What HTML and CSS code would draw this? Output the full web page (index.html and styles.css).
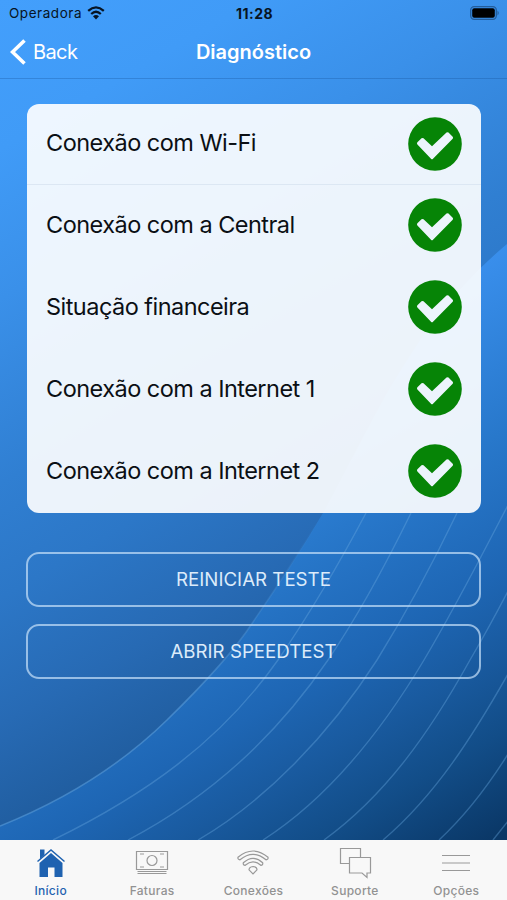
FILE: index.html
```html
<!DOCTYPE html>
<html lang="pt-BR">
<head>
    <meta charset="UTF-8">
    <meta name="viewport" content="width=device-width, initial-scale=1.0">
    <title>Diagnóstico</title>
    <link rel="stylesheet" href="styles.css">
</head>
<body>

<!-- Wallpaper -->
<svg class="wallpaper" viewBox="0 0 507 840" preserveAspectRatio="none">
    <defs>
        <linearGradient id="sky" gradientUnits="userSpaceOnUse" x1="0" y1="0" x2="500" y2="860">
            <stop offset="0" stop-color="#439ffc"/>
            <stop offset="0.13" stop-color="#409bf7"/>
            <stop offset="0.26" stop-color="#3a90e9"/>
            <stop offset="0.42" stop-color="#307fd2"/>
            <stop offset="0.52" stop-color="#2c77c7"/>
            <stop offset="0.63" stop-color="#276ab4"/>
            <stop offset="0.73" stop-color="#205d9f"/>
        </linearGradient>
        <linearGradient id="wave" gradientUnits="userSpaceOnUse" x1="0" y1="0" x2="500" y2="860">
            <stop offset="0.46" stop-color="#3a90ee"/>
            <stop offset="0.63" stop-color="#2878cb"/>
            <stop offset="0.75" stop-color="#1e66b4"/>
            <stop offset="0.82" stop-color="#195a9f"/>
            <stop offset="0.89" stop-color="#124d88"/>
            <stop offset="0.98" stop-color="#0a3766"/>
        </linearGradient>
        <linearGradient id="edge" gradientUnits="userSpaceOnUse" x1="0" y1="520" x2="0" y2="700">
            <stop offset="0" stop-color="#5da0dc" stop-opacity="0"/>
            <stop offset="1" stop-color="#5da0dc" stop-opacity="0.55"/>
        </linearGradient>
    </defs>
    <rect width="507" height="840" fill="url(#sky)"/>
    <path d="M0 826C70 798 123 763 167 720C208 680 235 650 253 622C288 571 302 548 323 513C370 430 410 325 507 244V840H0Z" fill="url(#wave)"/>
    <path d="M0 826C70 798 123 763 167 720C208 680 235 650 253 622C288 571 302 548 323 513" fill="none" stroke="url(#edge)" stroke-width="1.5"/>
    <g class="wave-lines">
        <path d="M53 840C145 795 220 742 278 660C311 612 340 562 366 513"/>
        <path d="M128 840C208 798 275 738 328 660C362 610 387 562 411 513"/>
        <path d="M198 840C265 801 329 735 377 660C408 610 433 563 457 513"/>
        <path d="M263 840C327 799 381 732 424 660C455 608 482 555 508 505"/>
        <path d="M324 840C386 795 430 732 470 660C484 636 496 614 508 591"/>
        <path d="M383 840C436 795 474 734 508 674"/>
        <path d="M439 840C467 814 488 786 508 754"/>
        <path d="M493 840L508 821"/>
    </g>
</svg>

<div class="screen">
    <div class="status-bar">
        <div class="carrier">
            <span>Operadora</span>
            <svg class="signal" viewBox="0 0 18 14">
                <path d="M1.2 4.800Q9-2 16.800 4.800M4.200 8Q9 3.600 13.800 8" fill="none" stroke="#071423" stroke-width="2.300"/>
                <path d="M6 10.300Q9 7.700 12 10.300L9 13.500Z" fill="#071423"/>
            </svg>
        </div>
        <div class="clock">11:28</div>
        <svg class="battery" viewBox="0 0 30 14">
            <rect x="0.700" y="0.700" width="25.600" height="12.600" rx="3.500" fill="none" stroke="#235d9b" stroke-width="1.300"/>
            <rect x="2.200" y="2.200" width="22.600" height="9.600" rx="2" fill="#000"/>
            <path d="M27.500 4.500Q30 7 27.500 9.500Z" fill="#235d9b"/>
        </svg>
    </div>

    <div class="nav-bar">
        <a class="back">
            <svg viewBox="0 0 16 26"><path d="M14.500 1.500L2.500 13L14.500 24.500" fill="none" stroke="#fff" stroke-width="3.600"/></svg>
            <span>Back</span>
        </a>
        <div class="title">Diagnóstico</div>
    </div>

    <div class="content">
        <div class="card">
            <div class="row first">
                <span>Conexão com Wi-Fi</span>
                <svg class="check" viewBox="0 0 54 54"><circle cx="27" cy="27" r="26.800"/><path d="M9.400 25.300L13.500 21.300Q14.500 20.500 15.500 21.300L24 29.300L38.500 15.600Q39.500 14.800 40.500 15.600L44.700 19.700Q45.500 20.700 44.700 21.700L25 41.700Q24 42.700 23 41.700L9.400 27.500Q8.400 26.400 9.400 25.300Z"/></svg>
            </div>
            <div class="row">
                <span>Conexão com a Central</span>
                <svg class="check" viewBox="0 0 54 54"><circle cx="27" cy="27" r="26.800"/><path d="M9.400 25.300L13.500 21.300Q14.500 20.500 15.500 21.300L24 29.300L38.500 15.600Q39.500 14.800 40.500 15.600L44.700 19.700Q45.500 20.700 44.700 21.700L25 41.700Q24 42.700 23 41.700L9.400 27.500Q8.400 26.400 9.400 25.300Z"/></svg>
            </div>
            <div class="row">
                <span>Situação financeira</span>
                <svg class="check" viewBox="0 0 54 54"><circle cx="27" cy="27" r="26.800"/><path d="M9.400 25.300L13.500 21.300Q14.500 20.500 15.500 21.300L24 29.300L38.500 15.600Q39.500 14.800 40.500 15.600L44.700 19.700Q45.500 20.700 44.700 21.700L25 41.700Q24 42.700 23 41.700L9.400 27.500Q8.400 26.400 9.400 25.300Z"/></svg>
            </div>
            <div class="row">
                <span>Conexão com a Internet 1</span>
                <svg class="check" viewBox="0 0 54 54"><circle cx="27" cy="27" r="26.800"/><path d="M9.400 25.300L13.500 21.300Q14.500 20.500 15.500 21.300L24 29.300L38.500 15.600Q39.500 14.800 40.500 15.600L44.700 19.700Q45.500 20.700 44.700 21.700L25 41.700Q24 42.700 23 41.700L9.400 27.500Q8.400 26.400 9.400 25.300Z"/></svg>
            </div>
            <div class="row">
                <span>Conexão com a Internet 2</span>
                <svg class="check" viewBox="0 0 54 54"><circle cx="27" cy="27" r="26.800"/><path d="M9.400 25.300L13.500 21.300Q14.500 20.500 15.500 21.300L24 29.300L38.500 15.600Q39.500 14.800 40.500 15.600L44.700 19.700Q45.500 20.700 44.700 21.700L25 41.700Q24 42.700 23 41.700L9.400 27.500Q8.400 26.400 9.400 25.300Z"/></svg>
            </div>
        </div>

        <button class="action">REINICIAR TESTE</button>
        <button class="action">ABRIR SPEEDTEST</button>
    </div>

    <div class="tab-bar">
        <div class="tab active">
            <svg viewBox="0 0 36 32">
                <path d="M6.500 16L18 6L29.500 16V30H21.500V20.500H15V30H6.500Z" fill="#1f62b0"/>
                <path d="M7 2.500H11.500V8L7 12Z" fill="#1f62b0"/>
                <path d="M4.500 14.500L18 3L31.500 14.500" fill="none" stroke="#1f62b0" stroke-width="1.500"/>
            </svg>
            <span>Início</span>
        </div>
        <div class="tab">
            <svg viewBox="0 0 36 32">
                <path d="M2.500 4.500H33.500V22.500H2.500ZM3.500 24.500H32.500M3.500 26.500H32.500M6 7H10M26 7H30M6 20H10M26 20H30"/>
                <circle cx="18" cy="13.500" r="5"/>
            </svg>
            <span>Faturas</span>
        </div>
        <div class="tab">
            <svg viewBox="0 0 36 32">
                <path d="M3 10.200Q18-2.200 33 10.200Q33.500 12.500 31 12.800Q18 1.800 5 12.800Q2.500 12.500 3 10.200ZM8.300 15.800Q18 6.800 27.700 15.800Q28.200 18 25.800 18.300Q18 11.500 10.200 18.300Q7.800 18 8.300 15.800ZM14 22.800Q14 20 18 19.500Q22 20 22 22.800L18 26.800Z"/>
            </svg>
            <span>Conexões</span>
        </div>
        <div class="tab">
            <svg viewBox="0 0 36 32">
                <path d="M12.500 16.500H3.500V1.500H23.500V10.500M12.500 10.500H33.500V26H30V30.500L25 26H12.500Z"/>
            </svg>
            <span>Suporte</span>
        </div>
        <div class="tab">
            <svg viewBox="0 0 36 32">
                <path d="M4 8.500H32M4 16H32M4 23.500H32"/>
            </svg>
            <span>Opções</span>
        </div>
    </div>
</div>

</body>
</html>
```
FILE: styles.css
```css
* {
    box-sizing: border-box;
}
body {
    margin: 0;
    font-family: Inter, Roboto, sans-serif;
    background-color: #2b76c6;
    overflow: hidden;
}
svg {
    display: block;
    flex-shrink: 0;
}
.wallpaper {
    position: absolute; /* Sits behind the whole screen */
    top: 0;
    left: 0;
    width: 507px;
    height: 840px;
}
.wave-lines path {
    fill: none;
    stroke: #6aa8e0;
    stroke-opacity: 0.38;
    stroke-width: 1.4;
}
.screen {
    position: relative;
    display: flex;
    flex-direction: column;
    width: 507px;
    height: 900px;
}
.status-bar {
    display: grid;
    grid-template-columns: 1fr auto 1fr;
    align-items: center;
    height: 26px;
    padding: 0 7px 0 9px;
    color: #071423;
    font-size: 13.5px;
}
.carrier {
    display: flex;
    align-items: center;
    gap: 5px;
    letter-spacing: 0.55px;
}
.signal {
    width: 18px;
    height: 14px;
}
.clock {
    font-weight: 700;
    font-size: 14px;
    letter-spacing: 0.5px;
}
.battery {
    width: 30px;
    height: 14px;
    justify-self: end;
}
.nav-bar {
    display: grid;
    grid-template-columns: 1fr auto 1fr;
    align-items: center;
    height: 53px;
    padding: 0 10px 1px;
    color: #fff;
    border-bottom: 1px solid rgba(20, 80, 150, 0.3);
}
.back {
    display: flex;
    align-items: center;
    gap: 7px;
    font-size: 20px;
    letter-spacing: -0.6px;
}
.back svg {
    width: 16px;
    height: 26px;
}
.title {
    font-size: 20px;
    font-weight: 600;
}
.content {
    flex: 1;
    padding: 25px 26px 0 27px;
}
.card {
    height: 409px;
    margin-bottom: 39px;
    background-color: rgba(255, 255, 255, 0.91);
    border-radius: 12px;
}
.row {
    display: flex;
    justify-content: space-between;
    align-items: center;
    height: 82px;
    padding: 0 19px 2px 19px;
    font-size: 23.5px;
    letter-spacing: -0.53px;
    color: #0b0f14;
}
.row.first {
    height: 81px;
    border-bottom: 1px solid #dce7f3;
    padding-bottom: 1px;
}
.row span {
    padding-bottom: 2px;
}
.check {
    width: 54px;
    height: 54px;
}
.check circle {
    fill: #068406;
}
.check path {
    fill: #ecf4fc;
}
.action {
    display: block;
    width: 455px;
    height: 55px;
    margin: 0 0 17px -1px;
    padding: 0;
    background: none;
    border: 2px solid rgba(200, 225, 250, 0.7);
    border-radius: 13px;
    color: #dcebfa;
    font-family: inherit;
    font-size: 18.7px;
}
.tab-bar {
    display: grid;
    grid-template-columns: repeat(5, 1fr);
    height: 60px;
    padding-top: 7px;
    background-color: #f8f8f8;
}
.tab {
    display: flex;
    flex-direction: column;
    align-items: center;
    gap: 4px;
    color: #929292;
    font-size: 12px;
    font-weight: 500;
    letter-spacing: 0.3px;
    line-height: 15px;
}
.tab svg {
    width: 36px;
    height: 32px;
    fill: none;
    stroke: #999;
    stroke-width: 1.2;
}
.tab.active {
    color: #1f62b0;
}
.tab.active svg {
    stroke: none;
}
```
